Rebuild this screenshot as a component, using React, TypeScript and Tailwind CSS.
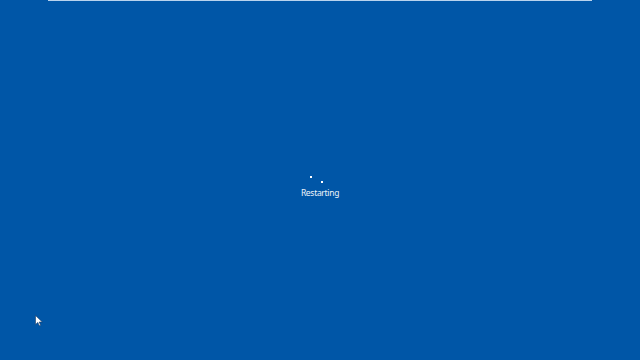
export default function App() {
  return (
    <div className="relative w-[640px] h-[360px] overflow-hidden bg-[#0056a7] font-['Noto_Sans',sans-serif]">
      <div className="mx-[48px] h-px bg-[#b9d3ee]" />
      <div className="flex flex-col items-center pt-[174px]">
        <div className="relative w-[20px] h-[10px]">
          <span className="absolute left-[0px] top-[1px] w-[2px] h-[2px] bg-white" />
          <span className="absolute left-[11px] top-[6px] w-[2px] h-[2px] bg-white" />
        </div>
        <div className="mt-[2px] text-[8.5px] leading-[12px] tracking-[-0.3px] text-[#eef4fb]">Restarting</div>
      </div>
      <svg className="absolute left-[35px] top-[315px]" width="8" height="12" viewBox="0 0 8 12">
        <path d="M0.5 0.5 L0.5 9.5 L2.8 7.4 L4.3 10.8 L5.6 10.2 L4.2 7 L7.3 7 Z" fill="#ffffff" stroke="#1a3b66" strokeWidth="0.6" />
      </svg>
    </div>
  );
}
